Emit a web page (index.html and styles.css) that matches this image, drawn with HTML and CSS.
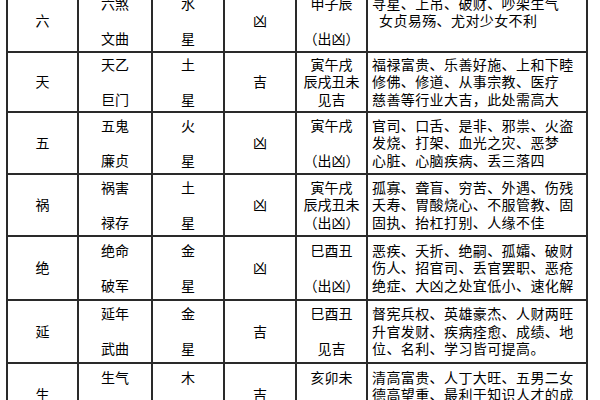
FILE: index.html
```html
<!DOCTYPE html>
<html lang="zh-CN">
<head>
<meta charset="utf-8">
<title>八宅游星表</title>
<link rel="stylesheet" href="styles.css">
</head>
<body>
<div class="wrap">
<table class="grid">
<colgroup>
<col class="c1"><col class="c2"><col class="c3"><col class="c4"><col class="c5"><col class="c6">
</colgroup>
<tbody>
<tr class="r1">
  <td>六</td>
  <td><div class="ln">六煞</div><div class="ln">&nbsp;</div><div class="ln">文曲</div></td>
  <td><div class="ln">水</div><div class="ln">&nbsp;</div><div class="ln">星</div></td>
  <td>凶</td>
  <td><div class="ln">申子辰</div><div class="ln">&nbsp;</div><div class="ln">（出凶）</div></td>
  <td class="txt"><div class="ln">寻星、上吊、破财、吵架生气</div><div class="ln ind">女贞易殇、尤对少女不利</div><div class="ln">&nbsp;</div></td>
</tr>
<tr class="r2">
  <td>天</td>
  <td><div class="ln">天乙</div><div class="ln">&nbsp;</div><div class="ln">巨门</div></td>
  <td><div class="ln">土</div><div class="ln">&nbsp;</div><div class="ln">星</div></td>
  <td>吉</td>
  <td><div class="ln">寅午戌</div><div class="ln">辰戌丑未</div><div class="ln">见吉</div></td>
  <td class="txt"><div class="ln">福禄富贵、乐善好施、上和下睦</div><div class="ln">修佛、修道、从事宗教、医疗</div><div class="ln">慈善等行业大吉，此处需高大</div></td>
</tr>
<tr class="r3">
  <td>五</td>
  <td><div class="ln">五鬼</div><div class="ln">&nbsp;</div><div class="ln">廉贞</div></td>
  <td><div class="ln">火</div><div class="ln">&nbsp;</div><div class="ln">星</div></td>
  <td>凶</td>
  <td><div class="ln">寅午戌</div><div class="ln">&nbsp;</div><div class="ln">（出凶）</div></td>
  <td class="txt"><div class="ln">官司、口舌、是非、邪祟、火盗</div><div class="ln">发烧、打架、血光之灾、恶梦</div><div class="ln">心脏、心脑疾病、丢三落四</div></td>
</tr>
<tr class="r4">
  <td>祸</td>
  <td><div class="ln">祸害</div><div class="ln">&nbsp;</div><div class="ln">禄存</div></td>
  <td><div class="ln">土</div><div class="ln">&nbsp;</div><div class="ln">星</div></td>
  <td>凶</td>
  <td><div class="ln">寅午戌</div><div class="ln">辰戌丑未</div><div class="ln">（出凶）</div></td>
  <td class="txt"><div class="ln">孤寡、聋盲、穷苦、外遇、伤残</div><div class="ln">夭寿、胃酸烧心、不服管教、固</div><div class="ln">固执、抬杠打别、人缘不佳</div></td>
</tr>
<tr class="r5">
  <td>绝</td>
  <td><div class="ln">绝命</div><div class="ln">&nbsp;</div><div class="ln">破军</div></td>
  <td><div class="ln">金</div><div class="ln">&nbsp;</div><div class="ln">星</div></td>
  <td>凶</td>
  <td><div class="ln">巳酉丑</div><div class="ln">&nbsp;</div><div class="ln">（出凶）</div></td>
  <td class="txt"><div class="ln">恶疾、夭折、绝嗣、孤孀、破财</div><div class="ln">伤人、招官司、丢官罢职、恶疮</div><div class="ln">绝症、大凶之处宜低小、速化解</div></td>
</tr>
<tr class="r6">
  <td>延</td>
  <td><div class="ln">延年</div><div class="ln">&nbsp;</div><div class="ln">武曲</div></td>
  <td><div class="ln">金</div><div class="ln">&nbsp;</div><div class="ln">星</div></td>
  <td>吉</td>
  <td><div class="ln">巳酉丑</div><div class="ln">&nbsp;</div><div class="ln">见吉</div></td>
  <td class="txt"><div class="ln">督宪兵权、英雄豪杰、人财两旺</div><div class="ln">升官发财、疾病痊愈、成绩、地</div><div class="ln">位、名利、学习皆可提高。</div></td>
</tr>
<tr class="r7">
  <td>生</td>
  <td><div class="ln">生气</div><div class="ln">&nbsp;</div><div class="ln">贪狼</div></td>
  <td><div class="ln">木</div><div class="ln">&nbsp;</div><div class="ln">星</div></td>
  <td>吉</td>
  <td><div class="ln">亥卯未</div><div class="ln">&nbsp;</div><div class="ln">见吉</div></td>
  <td class="txt"><div class="ln">清高富贵、人丁大旺、五男二女</div><div class="ln">德高望重、最利于知识人才的成</div><div class="ln">长、事业有成、家道兴旺</div></td>
</tr>
</tbody>
</table>
</div>
</body>
</html>
```

FILE: styles.css
```css
html, body {
  margin: 0;
  padding: 0;
  background: #ffffff;
}
body {
  font-family: "Noto Sans CJK SC", "Noto Sans", sans-serif;
  color: #000000;
  font-size: 14px;
  overflow: hidden;
  width: 600px;
  height: 400px;
}
.wrap {
  margin-top: -11px;
  padding-left: 6px;
}
.grid {
  border-collapse: collapse;
  table-layout: fixed;
  width: 580px;
}
.c1 { width: 71px; }
.c2 { width: 74px; }
.c3 { width: 72px; }
.c4 { width: 72px; }
.c5 { width: 71px; }
.c6 { width: 220px; }
.grid td {
  border: 2px solid #2a2a2a;
  padding: 0;
  text-align: center;
  vertical-align: middle;
  line-height: 17.5px;
  white-space: nowrap;
  overflow: hidden;
}
.grid td.txt {
  text-align: left;
  padding-left: 4px;
  letter-spacing: 0.4px;
}
.ln.ind {
  padding-left: 7px;
}
.r1 td { height: 60px; }
.r2 td { height: 58px; }
.r3 td { height: 60px; }
.r4 td { height: 60px; }
.r5 td { height: 62px; }
.r6 td { height: 61px; }
.r7 td { height: 62px; }
```
